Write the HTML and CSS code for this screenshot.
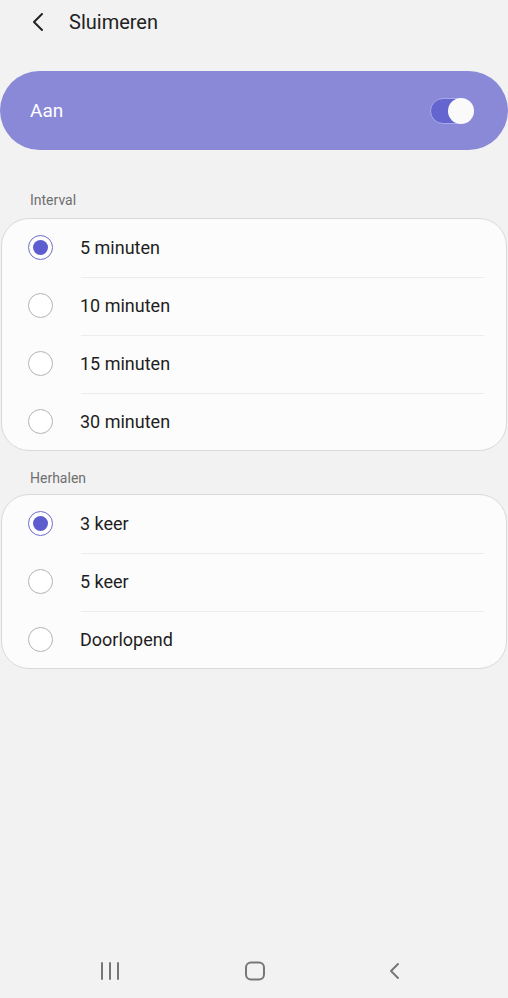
FILE: index.html
```html
<!DOCTYPE html>
<html lang="nl">
<head>
<meta charset="utf-8">
<link rel="stylesheet" href="styles.css">
</head>
<body>
<div class="screen">
  <header class="header">
    <svg class="back" width="14" height="20" viewBox="0 0 14 20"><path d="M11 2 L3 10 L11 18" fill="none" stroke="#222" stroke-width="2" stroke-linecap="round" stroke-linejoin="round"/></svg>
    <span class="title">Sluimeren</span>
  </header>

  <div class="master">
    <span class="master-label">Aan</span>
    <span class="switch"><span class="thumb"></span></span>
  </div>

  <div class="section-label first">Interval</div>
  <div class="card">
    <div class="row"><span class="radio on"></span><span class="text">5 minuten</span></div>
    <div class="row"><span class="radio"></span><span class="text">10 minuten</span></div>
    <div class="row"><span class="radio"></span><span class="text">15 minuten</span></div>
    <div class="row"><span class="radio"></span><span class="text">30 minuten</span></div>
  </div>

  <div class="section-label">Herhalen</div>
  <div class="card">
    <div class="row"><span class="radio on"></span><span class="text">3 keer</span></div>
    <div class="row"><span class="radio"></span><span class="text">5 keer</span></div>
    <div class="row"><span class="radio"></span><span class="text">Doorlopend</span></div>
  </div>

  <div class="spacer"></div>

  <nav class="navbar">
    <svg width="22" height="18" viewBox="0 0 22 18"><path d="M3 1v16M11 1v16M19 1v16" stroke="#777" stroke-width="2" stroke-linecap="round"/></svg>
    <svg width="22" height="20" viewBox="0 0 22 20"><rect x="2" y="1.5" width="18" height="17" rx="5" fill="none" stroke="#777" stroke-width="2"/></svg>
    <svg width="14" height="18" viewBox="0 0 14 18"><path d="M10 2 L3 9 L10 16" fill="none" stroke="#777" stroke-width="2" stroke-linecap="round" stroke-linejoin="round"/></svg>
  </nav>
</div>
</body>
</html>
```
FILE: styles.css
```css
* { box-sizing: border-box; }
html, body { margin: 0; padding: 0; }
body {
  background: #f2f2f2;
  font-family: Roboto, "Noto Sans", sans-serif;
  color: #1e1e1e;
}
.screen {
  width: 508px;
  height: 998px;
  display: flex;
  flex-direction: column;
}
.header {
  height: 71px;
  display: flex;
  align-items: flex-start;
  padding-top: 11px;
}
.back { margin-left: 31px; margin-top: 1px; }
.title {
  margin-left: 24px;
  font-size: 20px;
  line-height: 22px;
  color: #222;
}
.master {
  height: 79px;
  background: #8a89d7;
  border-radius: 40px;
  display: flex;
  align-items: center;
  justify-content: space-between;
  padding: 0 34px 0 30px;
}
.master-label {
  color: #fff;
  font-size: 19px;
}
.switch {
  width: 44px;
  height: 26px;
  border-radius: 13px;
  background: #6465cf;
  border: 1px solid #a9a8ea;
  display: flex;
  justify-content: flex-end;
  align-items: center;
}
.thumb {
  width: 26px;
  height: 26px;
  border-radius: 50%;
  background: #fafafa;
  margin-right: -1px;
}
.section-label {
  height: 43px;
  padding: 19px 0 0 30px;
  font-size: 14px;
  line-height: 16px;
  color: #6f6f6f;
}
.section-label.first { height: 68px; padding-top: 42px; }
.card {
  margin: 0 1px;
  background: #fcfcfc;
  border: 1px solid #d9d9d9;
  border-radius: 28px;
}
.row {
  height: 58px;
  padding-bottom: 1px;
  display: flex;
  align-items: center;
  position: relative;
}
.row:last-child { height: 57px; padding-bottom: 0; }
.row + .row::before {
  content: "";
  position: absolute;
  top: 0;
  left: 79px;
  right: 22px;
  height: 1px;
  background: #ececec;
}
.radio {
  width: 25px;
  height: 25px;
  margin-left: 26px;
  border-radius: 50%;
  border: 1.3px solid #b4b4b4;
  background: #fff;
  display: flex;
  align-items: center;
  justify-content: center;
  flex: none;
}
.radio.on { border-color: #6d6cca; }
.radio.on::after {
  content: "";
  width: 15px;
  height: 15px;
  border-radius: 50%;
  background: #5d5dcf;
}
.text {
  margin-left: 27px;
  font-size: 18px;
  color: #1e1e1e;
}
.spacer { flex: 1; }
.navbar {
  height: 54px;
  display: flex;
  align-items: center;
  justify-content: space-between;
  padding: 2px 106px 2px 99px;
}
```
